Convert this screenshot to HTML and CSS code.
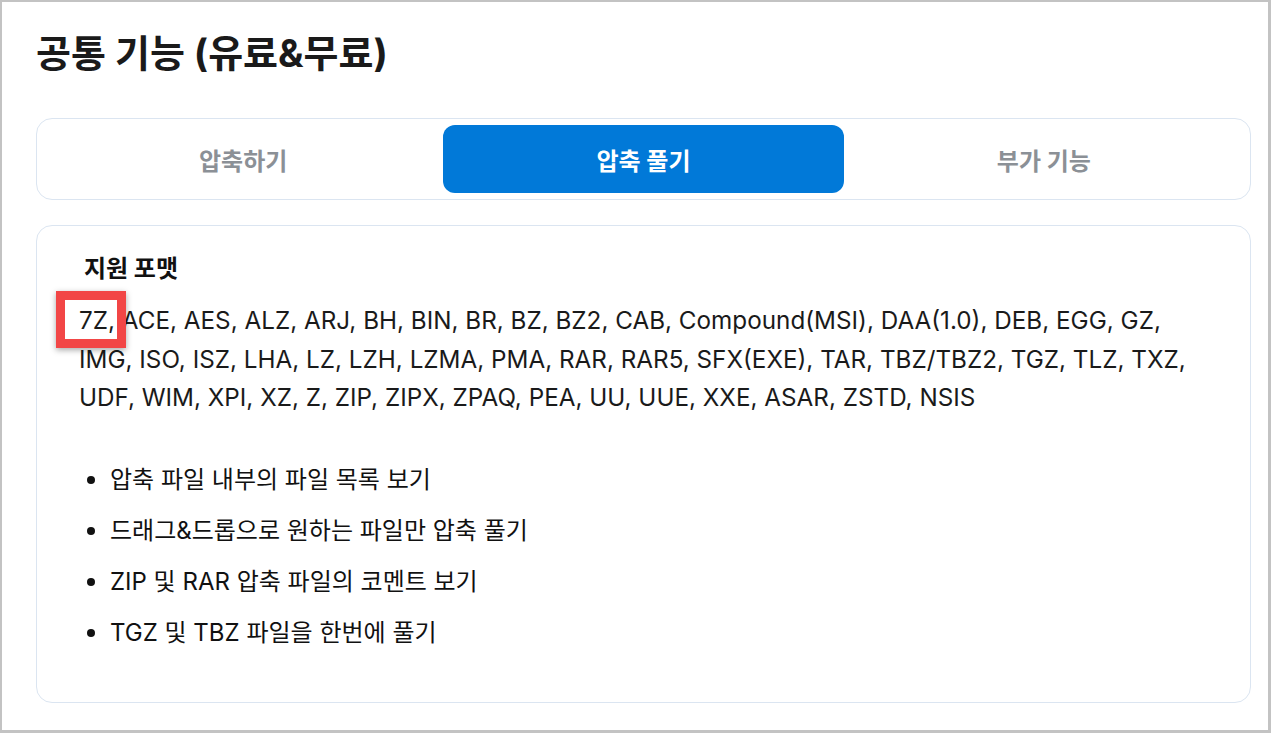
FILE: index.html
```html
<!DOCTYPE html>
<html lang="ko">
<head>
<meta charset="utf-8">
<link rel="stylesheet" href="styles.css">
</head>
<body>
<div class="frame">
  <h1 class="title">공통 기능 (유료&amp;무료)</h1>
  <div class="tabs">
    <div class="tab">압축하기</div>
    <div class="tab active">압축 풀기</div>
    <div class="tab">부가 기능</div>
  </div>
  <div class="card">
    <h2 class="sub">지원 포맷</h2>
    <p class="formats"><span class="first">7Z,<span class="mark"></span></span> ACE, AES, ALZ, ARJ, BH, BIN, BR, BZ, BZ2, CAB, Compound(MSI), DAA(1.0), DEB, EGG, GZ, IMG, ISO, ISZ, LHA, LZ, LZH, LZMA, PMA, RAR, RAR5, SFX(EXE), TAR, TBZ/TBZ2, TGZ, TLZ, TXZ, UDF, WIM, XPI, XZ, Z, ZIP, ZIPX, ZPAQ, PEA, UU, UUE, XXE, ASAR, ZSTD, NSIS</p>
    <ul class="list">
      <li>압축 파일 내부의 파일 목록 보기</li>
      <li>드래그&amp;드롭으로 원하는 파일만 압축 풀기</li>
      <li>ZIP 및 RAR 압축 파일의 코멘트 보기</li>
      <li>TGZ 및 TBZ 파일을 한번에 풀기</li>
    </ul>
  </div>
</div>
</body>
</html>
```

FILE: styles.css
```css
html, body {
  margin: 0;
  padding: 0;
  background: #ffffff;
}
body {
  font-family: "Inter", "Noto Sans CJK KR", sans-serif;
  color: #111111;
}
.frame {
  box-sizing: border-box;
  width: 1271px;
  height: 733px;
  border-style: solid;
  border-color: #c3c3c3;
  border-width: 2px 3px 3px 2px;
  padding: 0 17px 0 34px;
}
.title {
  margin: 0;
  padding-top: 28px;
  font-size: 38px;
  line-height: 46px;
  font-weight: 700;
  color: #1a1a1a;
}
.tabs {
  margin-top: 42px;
  display: flex;
  padding: 6px;
  border: 1px solid #dbe5f1;
  border-radius: 16px;
  height: 68px;
}
.tab {
  flex: 1;
  display: flex;
  align-items: center;
  justify-content: center;
  font-size: 24px;
  font-weight: 700;
  color: #8b9096;
  border-radius: 12px;
}
.tab.active {
  background: #0179d8;
  color: #ffffff;
}
.card {
  margin-top: 25px;
  border: 1px solid #dbe5f1;
  border-radius: 16px;
  height: 478px;
  box-sizing: border-box;
  padding: 28px 40px 0 42px;
}
.sub {
  margin: 0 0 0 5px;
  font-size: 24px;
  line-height: 30px;
  font-weight: 700;
  color: #111;
}
.formats {
  margin: 18px 0 0;
  font-size: 24.25px;
  line-height: 38.5px;
  color: #1a1a1a;
}
.first {
  position: relative;
}
.mark {
  position: absolute;
  left: -23px;
  top: -15px;
  width: 70px;
  height: 57px;
  box-sizing: border-box;
  border: 9px solid #f24646;
  box-shadow: 0 2px 6px rgba(0,0,0,0.35);
}
.list {
  list-style: none;
  margin: 46.5px 0 0;
  padding: 0;
  font-size: 24px;
  line-height: 32px;
  color: #111;
}
.list li {
  display: flex;
  align-items: center;
  margin-bottom: 19px;
}
.list li::before {
  content: "";
  flex-shrink: 0;
  width: 8px;
  height: 8px;
  border-radius: 50%;
  background: #111;
  margin: 0 15px 0 8px;
}
```
